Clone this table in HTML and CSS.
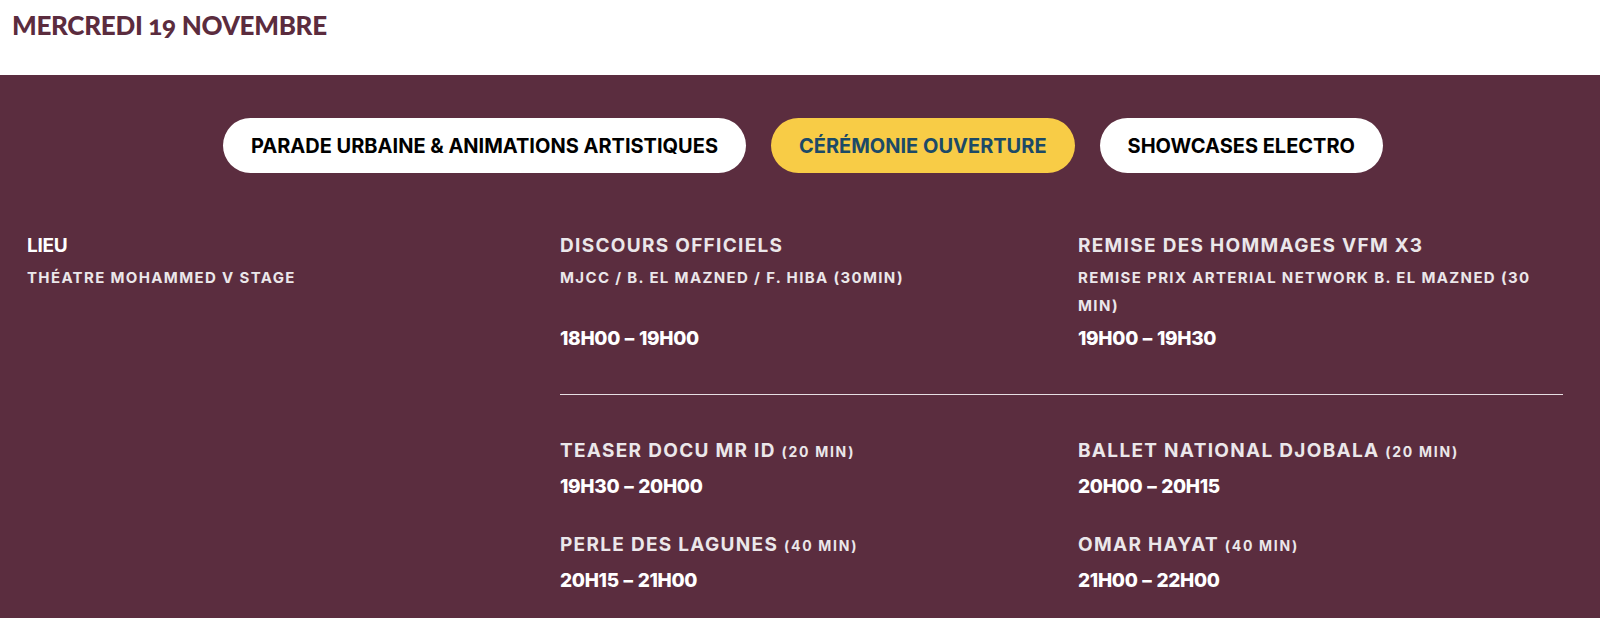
FILE: index.html
```html
<!DOCTYPE html>
<html lang="fr">
<head>
<meta charset="utf-8">
<title>Programme - Mercredi 19 novembre</title>
<link rel="stylesheet" href="styles.css">
</head>
<body>
<header class="day-head">
  <h2 class="day-title">MERCREDI <span class="onum">19</span> NOVEMBRE</h2>
</header>
<section class="band">
  <nav class="tabs">
    <a class="tab">PARADE URBAINE &amp; ANIMATIONS ARTISTIQUES</a>
    <a class="tab tab-active">CÉRÉMONIE OUVERTURE</a>
    <a class="tab">SHOWCASES ELECTRO</a>
  </nav>
  <div class="program">
    <div class="venue">
      <h3 class="venue-label">LIEU</h3>
      <p class="sub">THÉATRE MOHAMMED V STAGE</p>
    </div>
    <div class="events">
      <div class="row row-first">
        <div class="item">
          <h4 class="title">DISCOURS OFFICIELS</h4>
          <p class="sub">MJCC / B. EL MAZNED / F. HIBA (30MIN)</p>
          <p class="time">18H00 – 19H00</p>
        </div>
        <div class="item">
          <h4 class="title">REMISE DES HOMMAGES VFM X3</h4>
          <p class="sub">REMISE PRIX ARTERIAL NETWORK B. EL MAZNED (30 MIN)</p>
          <p class="time">19H00 – 19H30</p>
        </div>
      </div>
      <div class="row row-second">
        <div class="item">
          <h4 class="title">TEASER DOCU MR ID <span class="dur">(20 MIN)</span></h4>
          <p class="time">19H30 – 20H00</p>
        </div>
        <div class="item">
          <h4 class="title">BALLET NATIONAL DJOBALA <span class="dur">(20 MIN)</span></h4>
          <p class="time">20H00 – 20H15</p>
        </div>
        <div class="item">
          <h4 class="title">PERLE DES LAGUNES <span class="dur">(40 MIN)</span></h4>
          <p class="time">20H15 – 21H00</p>
        </div>
        <div class="item">
          <h4 class="title">OMAR HAYAT <span class="dur">(40 MIN)</span></h4>
          <p class="time">21H00 – 22H00</p>
        </div>
      </div>
    </div>
  </div>
</section>
</body>
</html>
```
FILE: styles.css
```css
* { box-sizing: border-box; }

html, body {
  margin: 0;
  padding: 0;
  background: #ffffff;
}

body {
  font-family: Inter, "Open Sans", "Noto Sans", sans-serif;
}

.day-head {
  height: 75px;
  padding: 9px 0 0 12px;
  background: #ffffff;
}

.day-title {
  margin: 0;
  font-family: Lato, "Open Sans", sans-serif;
  font-weight: 900;
  font-size: 26px;
  line-height: 32px;
  color: #5b2c3e;
  letter-spacing: -0.3px;
}

.onum {
  font-variant-numeric: oldstyle-nums;
  font-feature-settings: "onum" 1;
}

.band {
  background: #5b2d3f;
  min-height: 543px;
  padding: 43px 37px 40px 27px;
}

.tabs {
  display: flex;
  justify-content: center;
  gap: 25px;
  margin-left: 16px;
}

.tab {
  height: 55px;
  padding: 0 28px;
  border-radius: 28px;
  background: #ffffff;
  color: #000000;
  display: flex;
  align-items: center;
  font-weight: 700;
  font-size: 20px;
  letter-spacing: 0;
  white-space: nowrap;
}

.tab-active {
  background: #f8cc46;
  color: #1c4a67;
}

.program {
  display: flex;
  margin-top: 57px;
}

.venue {
  flex: 0 0 533px;
}

.venue-label {
  margin: 0;
  font-weight: 700;
  font-size: 19px;
  line-height: 32px;
  color: #ffffff;
  letter-spacing: -0.3px;
}

.events {
  flex: 1;
}

.row {
  display: grid;
  grid-template-columns: 1fr 1fr;
  column-gap: 33px;
}

.row-first {
  padding-bottom: 40px;
  border-bottom: 1px solid #e6dee2;
}

.row-second {
  padding-top: 40px;
  row-gap: 27px;
}

.item {
  display: flex;
  flex-direction: column;
}

.title {
  margin: 0;
  font-weight: 700;
  font-size: 19px;
  line-height: 32px;
  letter-spacing: 1.3px;
  color: #ebe7ea;
}

.dur {
  font-size: 14px;
  letter-spacing: 1.7px;
}

.sub {
  margin: 2px 0 0;
  font-weight: 700;
  font-size: 15px;
  line-height: 28px;
  letter-spacing: 1.35px;
  color: #ebe7ea;
}

.time {
  margin: auto 0 0;
  padding-top: 4px;
  font-weight: 800;
  font-size: 19px;
  line-height: 30px;
  letter-spacing: -0.3px;
  word-spacing: 1px;
  color: #ffffff;
}
```
